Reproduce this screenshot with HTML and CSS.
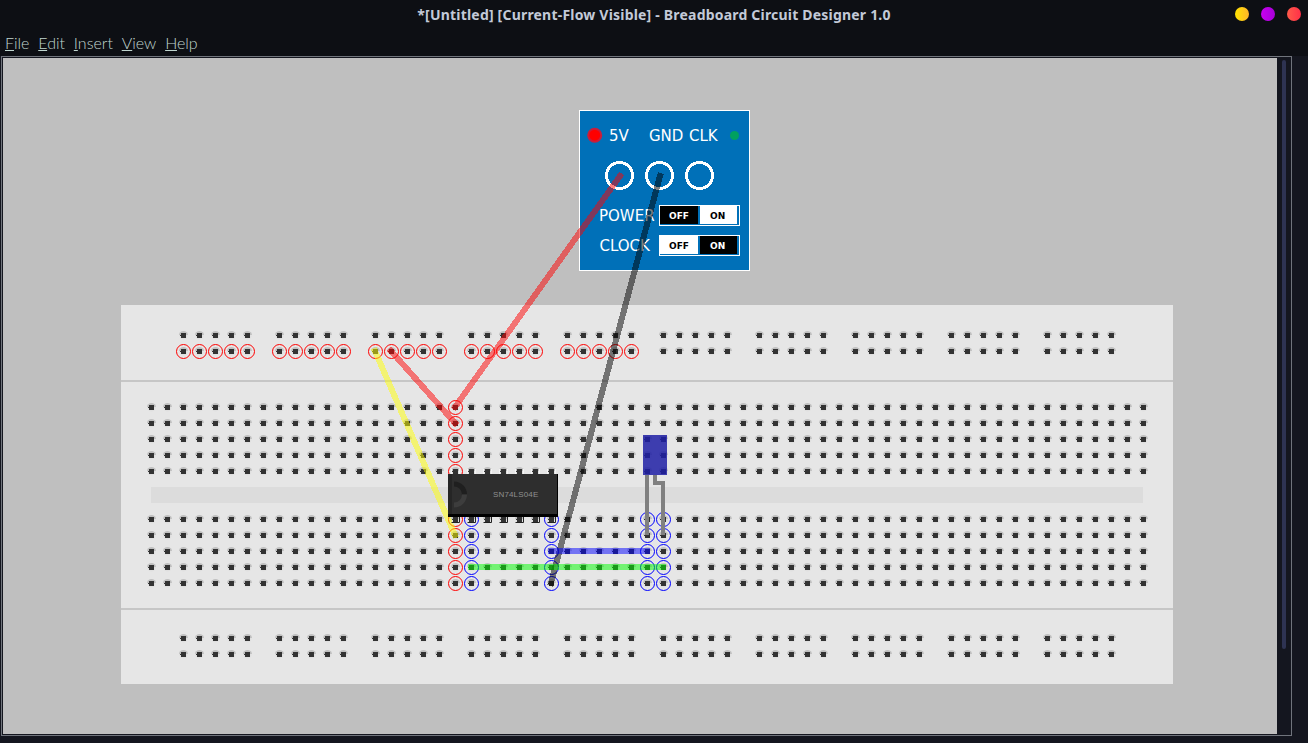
FILE: index.html
```html
<!DOCTYPE html>
<html lang="en">
<head>
    <meta charset="UTF-8">
    <meta name="viewport" content="width=device-width, initial-scale=1.0">
    <title>Breadboard Circuit Designer 1.0</title>
    <link rel="stylesheet" href="styles.css">
</head>
<body>
    <header class="titlebar">
        <span></span>
        <h1 class="title">*[Untitled] [Current-Flow Visible] - Breadboard Circuit Designer 1.0</h1>
        <div class="dots">
            <span class="dot yellow"></span>
            <span class="dot purple"></span>
            <span class="dot red"></span>
        </div>
    </header>

    <nav class="menubar">
        <span class="menu"><u>F</u>ile</span>
        <span class="menu"><u>E</u>dit</span>
        <span class="menu"><u>I</u>nsert</span>
        <span class="menu"><u>V</u>iew</span>
        <span class="menu"><u>H</u>elp</span>
    </nav>

    <main class="window">
        <div class="canvas">
            <!-- viewBox is offset so the numbers below are the same as page coordinates -->
            <svg id="board" width="1274" height="676" viewBox="3 58 1274 676">
                <rect class="board-base" x="121" y="305" width="1052" height="379"></rect>
                <rect class="board-line" x="121" y="380" width="1052" height="2"></rect>
                <rect class="board-line" x="121" y="608" width="1052" height="2"></rect>
                <rect class="groove" x="151" y="487" width="992" height="16"></rect>

                <g id="holes"></g>
                <g id="rings"></g>

                <!-- power / clock panel -->
                <g class="panel">
                    <rect class="panel-base" x="579.5" y="110.5" width="170" height="160"></rect>
                    <circle class="led-red-rim" cx="594.7" cy="135.2" r="7.5"></circle>
                    <circle class="led-red" cx="594.7" cy="135.2" r="5.5"></circle>
                    <circle class="led-green" cx="734.5" cy="135.5" r="4.5"></circle>
                    <text class="panel-text" x="609" y="141">5V</text>
                    <text class="panel-text" x="649" y="141">GND</text>
                    <text class="panel-text" x="689" y="141">CLK</text>
                    <circle class="socket" cx="619.5" cy="175.5" r="13"></circle>
                    <circle class="socket" cx="659.5" cy="175.5" r="13"></circle>
                    <circle class="socket" cx="699.5" cy="175.5" r="13"></circle>
                    <text class="panel-text" x="599" y="221">POWER</text>
                    <text class="panel-text" x="599.500" y="251">CLOCK</text>

                    <rect class="switch" x="659.5" y="205.5" width="80" height="20"></rect>
                    <rect class="cell-on" x="660" y="206" width="38" height="18"></rect>
                    <rect class="cell-off" x="700" y="206" width="37" height="18"></rect>
                    <text class="cell-text light" x="669" y="218.5">OFF</text>
                    <text class="cell-text" x="710" y="218.5">ON</text>

                    <rect class="switch" x="659.5" y="235.5" width="80" height="20"></rect>
                    <rect class="cell-off" x="660" y="236" width="38" height="18"></rect>
                    <rect class="cell-on" x="700" y="236" width="37" height="18"></rect>
                    <text class="cell-text" x="669" y="248.5">OFF</text>
                    <text class="cell-text light" x="710" y="248.5">ON</text>
                </g>

                <!-- wires -->
                <line class="wire w-red" x1="455" y1="407" x2="620" y2="176"></line>
                <line class="wire w-red" x1="391" y1="351" x2="455" y2="423"></line>
                <line class="wire w-yellow" x1="375" y1="351" x2="455" y2="535"></line>
                <line class="wire w-black" x1="551" y1="583" x2="660" y2="176"></line>
                <line class="wire w-blue" x1="551" y1="551" x2="647" y2="551"></line>
                <line class="wire w-green" x1="471" y1="567" x2="663" y2="567"></line>

                <!-- SN74LS04E -->
                <g id="pins"></g>
                <rect class="chip" x="448" y="474" width="110" height="43"></rect>
                <rect class="chip-left" x="448" y="474" width="4" height="40"></rect>
                <rect class="chip-edge" x="448" y="514" width="110" height="3"></rect>
                <rect class="chip-edge" x="557" y="474" width="1" height="43"></rect>
                <path class="notch-top" d="M454 484 A10.500 10.500 0 0 1 464.500 494.500"></path>
                <path class="notch-bottom" d="M464.500 494.500 A10.500 10.500 0 0 1 454 505"></path>
                <text class="chip-text" x="493" y="496.500">SN74LS04E</text>

                <!-- LED with its two legs -->
                <rect class="leg-fill" x="645" y="475" width="4" height="60"></rect>
                <path class="leg" d="M655 475 V483 H663 V535"></path>
                <rect class="led" x="643" y="435" width="24" height="40"></rect>
            </svg>
        </div>
        <div class="scrollbar"><div class="thumb"></div></div>
    </main>

    <script src="board.js"></script>
</body>
</html>
```

FILE: styles.css
```css
html, body {
    margin: 0;
    height: 100%;
}

body {
    width: 1308px;
    height: 743px;
    overflow: hidden;
    background-color: #14161f;
    display: flex;
    flex-direction: column;
}

.titlebar {
    height: 28px;
    background-color: #0d0f14;
    display: grid;
    grid-template-columns: 1fr auto 1fr;
    align-items: center;
}

.title {
    margin: 0;
    font-family: "Noto Sans", sans-serif;
    font-size: 14px;
    font-weight: 700;
    letter-spacing: 0.2px;
    color: #c3cad8;
}

.dots {
    display: flex;
    justify-content: flex-end;
    gap: 12px;
    padding-right: 7px;
}

.dot {
    width: 14px;
    height: 14px;
    border-radius: 50%;
}

.yellow { background: linear-gradient(90deg, #ffe400, #ffb52a); }
.purple { background: linear-gradient(90deg, #c800f0, #a800d8); }
.red { background: linear-gradient(90deg, #ff5a4a, #ff3048); }

.menubar {
    height: 28px;
    background-color: #0d0f14;
    display: flex;
    align-items: center;
    gap: 8.8px;
    padding-left: 5px;
    box-sizing: border-box;
    font-family: Lato, sans-serif;
    font-size: 16px;
    font-weight: 300;
    color: #c0d6d0;
}

.window {
    width: 1291px;
    height: 680px;
    margin-left: 1px;
    box-sizing: border-box;
    border: 1px solid #70747c;
    padding: 1px;
    display: flex;
}

.canvas {
    width: 1274px;
    height: 676px;
    background-color: #bfbfbf;
}

.canvas svg {
    display: block;
}

.scrollbar {
    width: 13px;
    padding: 2px 0 0 5px;
    box-sizing: border-box;
}

.thumb {
    width: 4px;
    height: 589px;
    border-radius: 2px;
    background-color: #2e3352;
}

/* board */
.board-base { fill: #e6e6e6; }
.board-line { fill: #c6c6c6; }
.groove { fill: #dcdcdc; }

.hole-top { fill: #c0c0c0; }
.hole-bottom { fill: #e0e0e0; }
.hole { fill: #333333; }

.ring {
    fill: none;
    stroke-width: 1;
}
.ring-red { stroke: #ff0000; }
.ring-blue { stroke: #0000ff; }

/* panel */
.panel-base {
    fill: #0070b8;
    stroke: #ffffff;
}
.led-red-rim { fill: #c81e3c; }
.led-red { fill: #ff0000; }
.led-green { fill: #00a060; }

.panel-text {
    font-family: "DejaVu Sans", sans-serif;
    font-size: 15px;
    fill: #ffffff;
}

.socket {
    fill: none;
    stroke: #ffffff;
    stroke-width: 3;
    shape-rendering: crispEdges;
}

.switch {
    fill: #0070b8;
    stroke: #ffffff;
}
.cell-on { fill: #000000; }
.cell-off { fill: #ffffff; }

.cell-text {
    font-family: "DejaVu Sans", sans-serif;
    font-size: 9px;
    font-weight: 700;
    fill: #000000;
}
.cell-text.light { fill: #ffffff; }

/* wires */
.wire {
    stroke-width: 6;
    stroke-linecap: square;
    shape-rendering: crispEdges;
}
.w-red { stroke: rgba(255, 0, 0, 0.5); }
.w-yellow { stroke: rgba(255, 255, 0, 0.5); }
.w-black { stroke: rgba(0, 0, 0, 0.5); }
.w-blue { stroke: rgba(0, 0, 255, 0.5); }
.w-green { stroke: rgba(0, 255, 0, 0.5); }

/* chip */
.chip { fill: #2e2e2e; }
.chip-left { fill: #252525; }
.chip-edge { fill: #000000; }

.notch-top, .notch-bottom {
    fill: none;
    stroke-width: 5;
}
.notch-top { stroke: #1f1f1f; }
.notch-bottom { stroke: #3d3d3d; }

.chip-text {
    font-family: "Liberation Sans", sans-serif;
    font-size: 8px;
    letter-spacing: 0.15px;
    fill: #909090;
}

.pin-top { fill: #f4f4f4; }
.pin-bottom {
    fill: none;
    stroke: #222222;
}

/* led */
.led { fill: rgba(30, 30, 165, 0.85); }
.leg-fill { fill: #808080; }
.leg {
    fill: none;
    stroke: #808080;
    stroke-width: 4;
}
```

FILE: board.js
```js
const NS = 'http://www.w3.org/2000/svg';

function add(parent, tag, attrs) {
    let el = document.createElementNS(NS, tag);
    for (let key in attrs) el.setAttribute(key, attrs[key]);
    parent.appendChild(el);
    return el;
}

const holes = document.getElementById('holes');
const rings = document.getElementById('rings');
const pins = document.getElementById('pins');

function addHole(x, y) {
    add(holes, 'circle', { class: 'hole-bottom', cx: x + 0.5, cy: y + 0.5, r: 4 });
    add(holes, 'path', { class: 'hole-top', d: `M${x - 4} ${y} A4.500 4 0 0 1 ${x + 5} ${y} Z` });
    add(holes, 'rect', { class: 'hole', x: x - 2, y: y - 2, width: 5, height: 5 });
    add(holes, 'rect', { class: 'hole', x: x - 3, y: y, width: 1, height: 1 });
}

function addRing(x, y, color) {
    add(rings, 'circle', { class: 'ring ring-' + color, cx: x + 0.5, cy: y + 0.5, r: 7 });
}

// power rails: 10 groups of 5, top and bottom
for (let group = 0; group < 10; group++) {
    for (let i = 0; i < 5; i++) {
        let x = 183 + group * 96 + i * 16;
        [335, 351, 638, 654].forEach(y => addHole(x, y));
    }
}

// main strips
for (let col = 0; col < 63; col++) {
    let x = 151 + col * 16;
    [407, 423, 439, 455, 471, 519, 535, 551, 567, 583].forEach(y => addHole(x, y));
}

// connected nets, the ones the simulator has marked
for (let group = 0; group < 5; group++) {
    for (let i = 0; i < 5; i++) addRing(183 + group * 96 + i * 16, 351, 'red');
}
[407, 423, 439, 455, 471, 519, 535, 551, 567, 583].forEach(y => addRing(455, y, 'red'));
[471, 551, 647, 663].forEach(x => {
    [519, 535, 551, 567, 583].forEach(y => addRing(x, y, 'blue'));
});

// chip legs
for (let i = 0; i < 7; i++) {
    let x = 455 + i * 16;
    add(pins, 'rect', { class: 'pin-top', x: x - 4, y: 469, width: 1, height: 5 });
    add(pins, 'rect', { class: 'pin-top', x: x + 4, y: 469, width: 1, height: 5 });
    add(pins, 'path', { class: 'pin-bottom', d: `M${x - 3.5} 522.500 H${x + 4.500} V517` });
}
```
